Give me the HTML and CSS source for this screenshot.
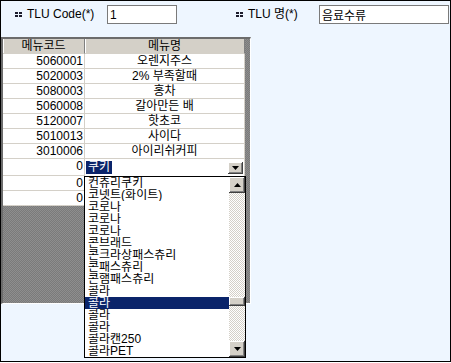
FILE: index.html
```html
<!DOCTYPE html>
<html lang="ko">
<head>
    <meta charset="UTF-8">
    <title>TLU 메뉴 등록</title>
    <link rel="stylesheet" href="styles.css">
</head>
<body>
    <div class="window">
        <!-- TLU search fields -->
        <div class="search-bar">
            <label class="field">
                <span class="field-label code-label">
                    <svg class="bullet" width="7" height="6" viewBox="0 0 7 6"><rect x="0" y="0" width="3" height="2"/><rect x="4" y="0" width="3" height="2"/><rect x="0" y="3" width="3" height="2"/><rect x="4" y="3" width="3" height="2"/></svg>
                    TLU Code(*)
                </span>
                <input class="field-input code-input" type="text" value="1">
            </label>
            <label class="field name-field">
                <span class="field-label name-label">
                    <svg class="bullet" width="7" height="6" viewBox="0 0 7 6"><rect x="0" y="0" width="3" height="2"/><rect x="4" y="0" width="3" height="2"/><rect x="0" y="3" width="3" height="2"/><rect x="4" y="3" width="3" height="2"/></svg>
                    TLU 명(*)
                </span>
                <input class="field-input name-input" type="text" value="음료수류">
            </label>
        </div>

        <!-- Menu grid -->
        <div class="grid">
            <div class="menu-grid">
                <div class="cell head">메뉴코드</div>
                <div class="cell head">메뉴명</div>

                <div class="cell num">5060001</div><div class="cell name">오렌지주스</div>
                <div class="cell num">5020003</div><div class="cell name">2% 부족할때</div>
                <div class="cell num">5080003</div><div class="cell name">홍차</div>
                <div class="cell num">5060008</div><div class="cell name">갈아만든 배</div>
                <div class="cell num">5120007</div><div class="cell name">핫초코</div>
                <div class="cell num">5010013</div><div class="cell name">사이다</div>
                <div class="cell num">3010006</div><div class="cell name">아이리쉬커피</div>

                <div class="cell num edit-row">0</div>
                <div class="cell edit-row combo-cell">
                    <div class="combo">
                        <span class="combo-text"><span class="selected-text">쿠키</span></span>
                        <span class="btn-3d combo-btn">
                            <svg width="7" height="4" viewBox="0 0 7 4"><polygon points="0,0 7,0 3.5,4"/></svg>
                        </span>
                    </div>
                </div>

                <div class="cell num">0</div><div class="cell name"></div>
                <div class="cell num">0</div><div class="cell name"></div>
            </div>

            <!-- Open combo list -->
            <div class="dropdown">
                <ul class="options">
                    <li>컨츄리쿠키</li>
                    <li>코넷트(화이트)</li>
                    <li>코로나</li>
                    <li>코로나</li>
                    <li>코로나</li>
                    <li>콘브래드</li>
                    <li>콘크라상패스츄리</li>
                    <li>콘패스츄리</li>
                    <li>콘햄패스츄리</li>
                    <li>콜라</li>
                    <li class="active">콜라</li>
                    <li>콜라</li>
                    <li>콜라</li>
                    <li>콜라캔250</li>
                    <li>콜라PET</li>
                </ul>
                <div class="scrollbar">
                    <span class="btn-3d sb-btn">
                        <svg width="7" height="4" viewBox="0 0 7 4"><polygon points="3.5,0 7,4 0,4"/></svg>
                    </span>
                    <div class="sb-track">
                        <span class="btn-3d sb-thumb"></span>
                    </div>
                    <span class="btn-3d sb-btn">
                        <svg width="7" height="4" viewBox="0 0 7 4"><polygon points="0,0 7,0 3.5,4"/></svg>
                    </span>
                </div>
            </div>
        </div>
    </div>
</body>
</html>
```

FILE: styles.css
```css
body {
    margin: 0;
    font-family: "Liberation Sans", "Noto Sans CJK KR", sans-serif;
    font-size: 12px;
    color: #000;
    background: #fff;
}
.window {
    width: 451px;
    height: 362px;
    box-sizing: border-box;
    border: 1px solid #000;
    background: #eef6ff;
}

/* search fields */
.search-bar {
    display: flex;
    align-items: flex-start;
    height: 36px;
    box-sizing: border-box;
    padding: 4px 0 0 14px;
}
.field {
    display: flex;
    align-items: center;
    height: 19px;
}
.name-field {
    margin-left: 59px;
}
.field-label {
    display: flex;
    align-items: center;
    gap: 5px;
    line-height: 19px;
    white-space: nowrap;
}
.code-label {
    width: 92px;
}
.name-label {
    width: 83px;
}
.bullet {
    fill: #1c1c2c;
}
.field-input {
    box-sizing: border-box;
    height: 19px;
    margin: 0;
    padding: 0 2px;
    border: 1px solid #7a7a7a;
    background: #fff;
    font: inherit;
    color: #000;
    outline: none;
}
.code-input {
    width: 70px;
}
.name-input {
    width: 130px;
}

/* grid */
.grid {
    position: relative;
    width: 250px;
    height: 267px;
    box-sizing: border-box;
    border-top: 2px solid #6c6c6c;
    border-left: 2px solid #6c6c6c;
    border-right: 1px solid #fff;
    border-bottom: 1px solid #fff;
    background: repeating-conic-gradient(#7a7a7a 0 25%, #8e8e8e 0 50%) 0 0 / 2px 2px;
}
.menu-grid {
    display: grid;
    grid-template-columns: 82px 160px;
    width: 242px;
}
.cell {
    height: 15px;
    box-sizing: border-box;
    border-right: 1px solid #d4d0c8;
    border-bottom: 1px solid #d4d0c8;
    background: #fff;
    line-height: 14px;
    white-space: nowrap;
    overflow: hidden;
}
.head {
    background: #d4d0c8;
    text-align: center;
    border-right-color: #808080;
    border-bottom-color: #d4d0c8;
    box-shadow: inset 1px 0 #fff;
}
.num {
    text-align: right;
    padding-right: 1px;
}
.name {
    text-align: center;
}
.edit-row {
    height: 17px;
    line-height: 15px;
}
.combo-cell {
    border-bottom: none;
    overflow: visible;
}
.combo {
    display: flex;
    align-items: center;
    height: 17px;
    background: #fff;
}
.combo-text {
    flex: 1;
    padding-left: 1px;
}
.selected-text {
    display: inline-block;
    padding: 0 2px;
    line-height: 13px;
    background: #0a246a;
    color: #fff;
}

/* 3d buttons */
.btn-3d {
    display: flex;
    align-items: center;
    justify-content: center;
    box-sizing: border-box;
    background: #d4d0c8;
    box-shadow: inset -1px -1px #404040, inset 1px 1px #fff, inset -2px -2px #808080;
}
.combo-btn {
    width: 15px;
    height: 12px;
    margin-right: 1px;
}

/* dropdown list */
.dropdown {
    position: absolute;
    left: 81px;
    top: 137px;
    display: flex;
    width: 162px;
    height: 182px;
    box-sizing: border-box;
    border: 1px solid #000;
    background: #fff;
}
.options {
    list-style: none;
    margin: 0;
    padding: 0;
    width: 144px;
}
.options li {
    height: 12px;
    line-height: 12px;
    padding-left: 3px;
    white-space: nowrap;
    overflow: hidden;
}
.options li.active {
    background: #0a246a;
    color: #fff;
}
.scrollbar {
    display: flex;
    flex-direction: column;
    width: 16px;
}
.sb-btn {
    height: 16px;
}
.sb-track {
    flex: 1;
    background: repeating-conic-gradient(#fff 0 25%, #d4d0c8 0 50%) 0 0 / 2px 2px;
}
.sb-thumb {
    display: block;
    height: 9px;
    margin-top: 104px;
}
```
